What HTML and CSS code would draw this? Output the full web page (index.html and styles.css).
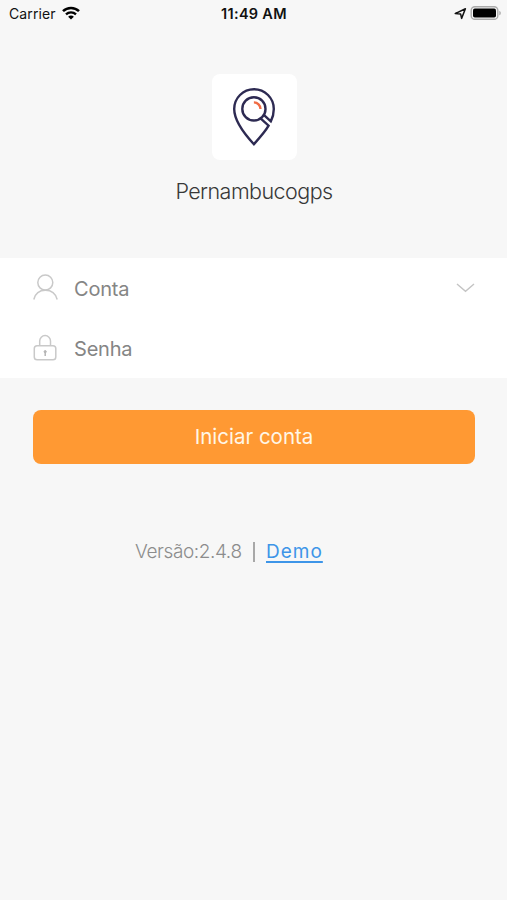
FILE: index.html
```html
<!DOCTYPE html>
<html lang="pt">
<head>
    <meta charset="UTF-8">
    <title>Pernambucogps</title>
    <link rel="stylesheet" href="styles.css">
</head>
<body>

<div class="status-bar">
    <div class="status-left">
        <span class="carrier">Carrier</span>
        <svg class="wifi" width="18" height="14" viewBox="0 0 18 14">
            <path d="M1 5.2C5.4.8 12.6.8 17 5.2" fill="none" stroke="#000" stroke-width="2.5"/>
            <path d="M4 8.4c2.8-2.7 7.2-2.7 10 0" fill="none" stroke="#000" stroke-width="2.3"/>
            <path d="M9 13.6 6.1 10.7c1.6-1.5 4.2-1.5 5.8 0z"/>
        </svg>
    </div>
    <span class="clock">11:49 AM</span>
    <div class="status-right">
        <svg width="13" height="13" viewBox="0 0 13 13">
            <path d="M1.2 6.6 11.4 1.8 7.6 11.4 6.6 6.9z" fill="none" stroke="#111" stroke-width="1.5" stroke-linejoin="round"/>
        </svg>
        <svg width="32" height="16" viewBox="0 0 32 16">
            <rect x="1.2" y="1.7" width="26.6" height="12.6" rx="3.6" fill="#f7f7f7" stroke="#aaa" stroke-width="1.4"/>
            <rect x="3" y="3.6" width="23" height="8.9" rx="1.8"/>
            <path d="M29.3 5.7c2 .8 2 3.8 0 4.6z" fill="#aaa"/>
        </svg>
    </div>
</div>

<div class="header">
    <div class="logo">
        <svg width="85" height="86" viewBox="1 0 85 86" fill="none" stroke="#2d2a52" stroke-width="2.4">
            <path d="M52 40.2 59.8 47.4C61.8 43.4 62.8 39.2 62.8 35A19.8 19.8 0 0 0 23.2 35C23.2 47.8 34 60.6 42.9 70.2 48.5 64 54.2 57.7 57.6 51.7L49 43.9"/>
            <circle cx="42.9" cy="34.9" r="11.6" fill="#fff"/>
            <path d="M42.9 28.4a6.6 6.6 0 0 1 6.6 6.6" stroke="#f06c45" stroke-width="2.4"/>
        </svg>
    </div>
    <div class="app-name">Pernambucogps</div>
</div>

<form class="login" action="" method="GET">
    <div class="fields">
        <label class="field">
            <svg width="26" height="28" viewBox="0 0 26 28" fill="none" stroke="#c9c9c9" stroke-width="1.5">
                <circle cx="12.3" cy="8.6" r="7.5"/>
                <path d="M.8 25.5C2.3 19.5 6.5 16.3 12.4 16.3s10.2 3.2 11.8 9.2"/>
            </svg>
            <input class="account" name="account" type="text" placeholder="Conta">
            <svg class="arrow" width="19" height="10" viewBox="0 0 19 10" fill="none" stroke="#c4c4c4" stroke-width="1.4">
                <path d="M1 1 9.5 8.3 18 1"/>
            </svg>
        </label>
        <label class="field">
            <svg width="26" height="28" viewBox="0 0 26 28" fill="none" stroke="#c9c9c9" stroke-width="1.5">
                <rect x="1.3" y="11.7" width="21.5" height="14" rx="2.8"/>
                <path d="M6.7 11.7V7a5.4 5.4 0 0 1 10.8 0v4.7"/>
                <circle cx="12.2" cy="17.7" r="1.1" fill="#b5b5b5" stroke="#b5b5b5" stroke-width="1"/>
                <path d="M12.2 18v4" stroke="#b5b5b5"/>
            </svg>
            <input class="password" name="password" type="password" placeholder="Senha">
        </label>
    </div>
    <button class="login-btn" type="submit">Iniciar conta</button>
</form>

<div class="footer">
    <span class="version">Versão:2.4.8</span>
    <span class="divider"></span>
    <a class="demo" href="#">Demo</a>
</div>

</body>
</html>
```

FILE: styles.css
```css
* {
    box-sizing: border-box;
}
body {
    margin: 0;
    min-height: 900px;
    background-color: #f7f7f7;
    font-family: Inter, "Liberation Sans", sans-serif;
}
.status-bar {
    display: grid;
    grid-template-columns: 1fr auto 1fr;
    align-items: center;
    height: 28px;
    padding: 0 5px 2px 9px;
    color: #111;
    font-size: 14px;
}
.status-left,
.status-right {
    display: flex;
    align-items: center;
}
.status-left {
    gap: 6px;
}
.carrier {
    letter-spacing: 0.1px;
}
.wifi {
    margin-top: -1px;
}
.status-right {
    justify-content: flex-end;
    gap: 3px;
}
.clock {
    margin-right: 3px;
    font-size: 14.5px;
    font-weight: 600;
    letter-spacing: 0.3px;
}
.header {
    display: flex;
    flex-direction: column;
    align-items: center;
    height: 230px;
    padding: 46px 0 0 1px;
}
.logo {
    width: 85px;
    height: 86px;
    border-radius: 8px;
    background-color: #fff;
}
.logo svg {
    display: block;
}
.app-name {
    margin-top: 16px;
    color: #383838;
    font-size: 21.5px;
    font-weight: 300;
    letter-spacing: -0.55px;
    line-height: 30px;
}
.fields {
    height: 120px;
    background-color: #fff;
}
.field {
    display: flex;
    align-items: center;
    height: 60px;
    padding: 0 32px 0 33px;
}
.field input {
    flex: 1;
    min-width: 0;
    margin: 2px 0 0 15px;
    padding: 0;
    border: 0;
    outline: 0;
    background: none;
    font-family: inherit;
    font-size: 20px;
    letter-spacing: -0.2px;
}
.field input::placeholder {
    color: #858585;
}
.login-btn {
    display: block;
    width: 442px;
    height: 54px;
    margin: 32px 0 0 33px;
    padding: 0 0 2px;
    border: 0;
    border-radius: 8px;
    background-color: #ff9933;
    color: #fff6e6;
    font-family: inherit;
    font-size: 20.5px;
}
.footer {
    display: flex;
    align-items: center;
    margin: 76px 0 0 135px;
    line-height: 24px;
}
.version {
    width: 107px;
    color: #8c8c8c;
    font-size: 19px;
    font-weight: 300;
    letter-spacing: -0.4px;
    white-space: nowrap;
}
.divider {
    width: 2px;
    height: 20px;
    margin: 0 11px;
    background-color: #a8a8a8;
}
.demo {
    color: #3d95e8;
    font-size: 19px;
    letter-spacing: 1px;
    text-underline-offset: 3px;
    text-decoration-thickness: 2px;
}
```
